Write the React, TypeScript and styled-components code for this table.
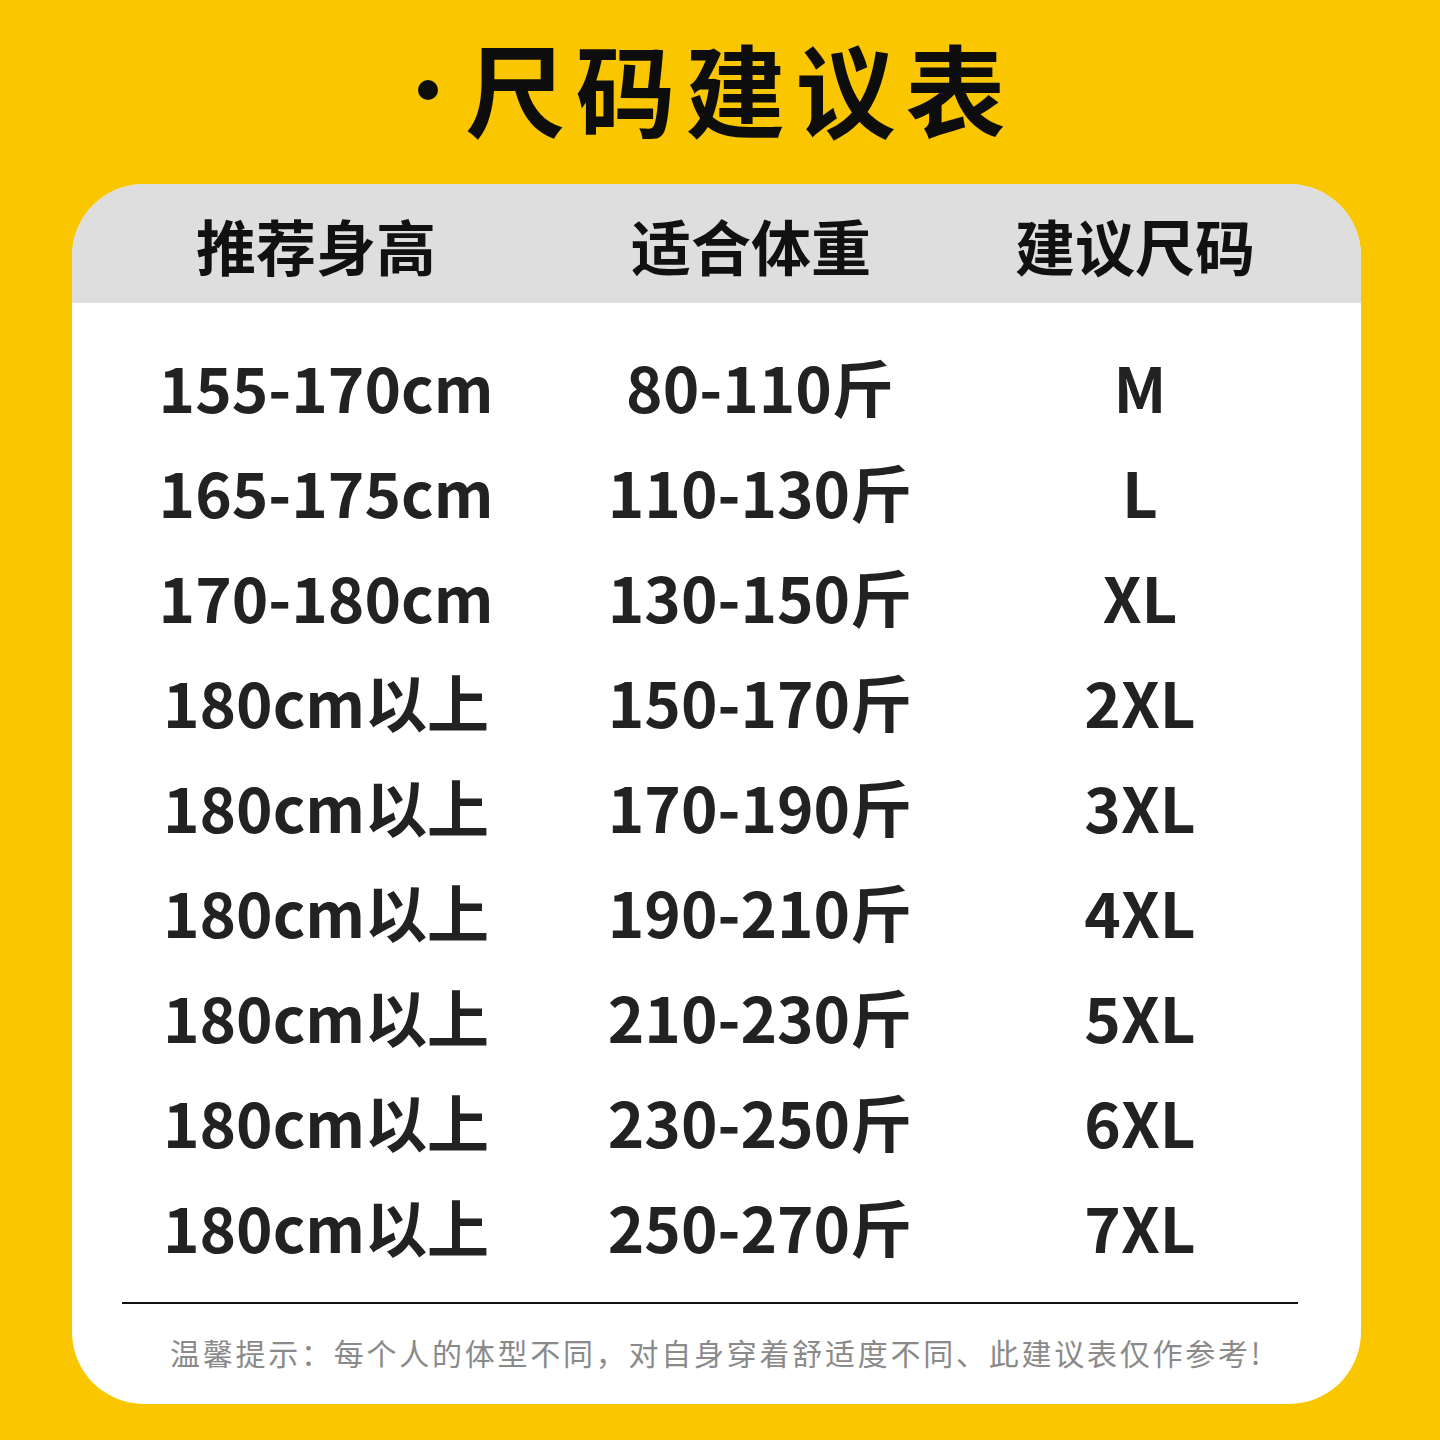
import React from "react";
import styled, { createGlobalStyle } from "styled-components";

const GlobalStyle = createGlobalStyle`
  html, body {
    margin: 0;
    padding: 0;
    background: #f9c600;
  }
  body {
    font-family: "Noto Sans CJK SC", "Noto Sans", sans-serif;
  }
`;

const rows = [
  ["155-170cm", "80-110斤", "M"],
  ["165-175cm", "110-130斤", "L"],
  ["170-180cm", "130-150斤", "XL"],
  ["180cm以上", "150-170斤", "2XL"],
  ["180cm以上", "170-190斤", "3XL"],
  ["180cm以上", "190-210斤", "4XL"],
  ["180cm以上", "210-230斤", "5XL"],
  ["180cm以上", "230-250斤", "6XL"],
  ["180cm以上", "250-270斤", "7XL"],
];

const headers = ["推荐身高", "适合体重", "建议尺码"];

const Page = styled.div`
  width: 1440px;
  height: 1440px;
  background: #f9c600;
  box-sizing: border-box;
  padding: 0 79px 0 72px;
  display: flex;
  flex-direction: column;
`;

const Title = styled.h1`
  margin: 0;
  height: 184px;
  box-sizing: border-box;
  padding: 0 0 12px 0;
  display: flex;
  align-items: center;
  justify-content: center;
  font-size: 100px;
  font-weight: 700;
  color: #0d0d0d;
  letter-spacing: 10px;
`;

const Dot = styled.span`
  display: inline-block;
  width: 20px;
  height: 20px;
  border-radius: 50%;
  background: #0d0d0d;
  margin-right: 28px;
  margin-top: 8px;
`;

const Card = styled.div`
  height: 1220px;
  background: #ffffff;
  border-radius: 72px;
  overflow: hidden;
  display: flex;
  flex-direction: column;
`;

const Grid = styled.div`
  display: grid;
  grid-template-columns: 508px 360px 400px 1fr;
`;

const HeaderRow = styled(Grid)`
  height: 119px;
  background: #dedede;
  align-items: center;
`;

const HeaderCell = styled.div<{ $shift: number }>`
  text-align: center;
  font-size: 60px;
  font-weight: 700;
  color: #111111;
  padding-right: ${(p) => p.$shift}px;
  line-height: 1;
  margin-top: 2px;
`;

const Body = styled.div`
  padding-top: 30px;
  display: flex;
  flex-direction: column;
`;

const DataRow = styled(Grid)`
  height: 105px;
  align-items: center;
`;

const DataCell = styled.div`
  text-align: center;
  font-size: 62px;
  font-weight: 700;
  color: #222222;
  line-height: 1;
`;

const Divider = styled.div`
  height: 2px;
  background: #111111;
  margin: 24px 63px 0 50px;
`;

const Note = styled.p`
  margin: 0;
  flex: 1;
  display: flex;
  align-items: center;
  justify-content: center;
  padding-bottom: 4px;
  font-size: 30px;
  font-weight: 400;
  color: #8a8a8a;
  letter-spacing: 2.75px;
`;

export default function App() {
  return (
    <>
      <GlobalStyle />
      <Page>
        <Title>
          <Dot />
          尺码建议表
        </Title>
        <Card>
          <HeaderRow>
            {headers.map((h, i) => (
              <HeaderCell key={h} $shift={[20, 18, 10][i]}>
                {h}
              </HeaderCell>
            ))}
          </HeaderRow>
          <Body>
            {rows.map((r, i) => (
              <DataRow key={i}>
                {r.map((c, j) => (
                  <DataCell key={j}>{c}</DataCell>
                ))}
              </DataRow>
            ))}
          </Body>
          <Divider />
          <Note>温馨提示：每个人的体型不同，对自身穿着舒适度不同、此建议表仅作参考!</Note>
        </Card>
      </Page>
    </>
  );
}
